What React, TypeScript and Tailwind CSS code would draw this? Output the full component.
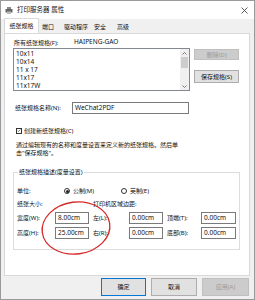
export default function App() {
  const input = "h-[12px] border border-[#7a7a7a] bg-white flex items-center px-[2px] text-[6.5px]";
  return (
    <div className="w-[255px] h-[300px] bg-[#f0f0f0] border border-[#9a9a9a] flex flex-col text-[6px] leading-none text-[#111] font-['Noto_Sans','Noto_Sans_CJK_SC',sans-serif] overflow-hidden">
      {/* title bar */}
      <div className="h-[18px] bg-white flex items-center pl-[4px] pr-[6px] shrink-0">
        <svg width="8" height="7" viewBox="0 0 8 7" className="mr-[4px]">
          <rect x="2" y="0" width="4" height="2" fill="#888" />
          <rect x="0.5" y="2" width="7" height="3.5" fill="#666" />
          <rect x="2" y="4.5" width="4" height="2.5" fill="#bbb" />
        </svg>
        <span className="text-[6.5px]">打印服务器 属性</span>
        <svg width="7" height="7" viewBox="0 0 7 7" className="ml-auto">
          <path d="M0.5 0.5 L6.5 6.5 M6.5 0.5 L0.5 6.5" stroke="#333" strokeWidth="0.8" />
        </svg>
      </div>
      {/* tabs */}
      <div className="h-[14px] flex items-end pl-[3px] shrink-0 relative z-10">
        <div className="h-[15px] w-[35px] bg-white border border-b-0 border-[#d9d9d9] flex items-center justify-center">纸张规格</div>
        <div className="h-[13px] flex items-center ml-[3px]">端口</div>
        <div className="h-[13px] flex items-center ml-[10px]">驱动程序</div>
        <div className="h-[13px] flex items-center ml-[6px]">安全</div>
        <div className="h-[13px] flex items-center ml-[11px]">高级</div>
      </div>
      {/* panel */}
      <div className="ml-[3px] w-[246px] h-[243px] bg-white border border-[#d9d9d9] flex flex-col pl-[8px] pr-[8px] shrink-0 relative">
        <div className="mt-[4px] h-[9px] flex items-center pl-[1px]">
          <span className="w-[60px]">所有纸张规格(F):</span>
          <span className="text-[6.5px]">HAIPENG-GAO</span>
        </div>
        <div className="mt-[1px] flex gap-[4px]">
          <div className="w-[177px] h-[43px] border border-[#828790] flex">
            <div className="flex-1 flex flex-col pl-[2px] pt-[1px] text-[6.5px]">
              {["10x11", "10x14", "11 x 17", "11x17", "11x17W"].map((t) => (
                <div key={t} className="h-[8.3px] flex items-center">{t}</div>
              ))}
            </div>
            <div className="w-[9px] bg-[#f0f0f0] flex flex-col items-center">
              <div className="h-[8px] flex items-center">
                <svg width="5" height="3" viewBox="0 0 5 3"><path d="M0.5 2.5 L2.5 0.5 L4.5 2.5" stroke="#606060" strokeWidth="0.8" fill="none" /></svg>
              </div>
              <div className="w-[7px] h-[11px] bg-[#cdcdcd]" />
              <div className="mt-auto h-[8px] flex items-center">
                <svg width="5" height="3" viewBox="0 0 5 3"><path d="M0.5 0.5 L2.5 2.5 L4.5 0.5" stroke="#606060" strokeWidth="0.8" fill="none" /></svg>
              </div>
            </div>
          </div>
          <div className="flex flex-col pt-[1px]">
            <div className="w-[45px] h-[11px] bg-[#cccccc] border border-[#bfbfbf] text-[#9a9a9a] flex items-center justify-center">删除(D)</div>
            <div className="mt-[10px] w-[45px] h-[13px] bg-[#e1e1e1] border border-[#adadad] flex items-center justify-center">保存规格(S)</div>
          </div>
        </div>
        <div className="mt-[11px] h-[12px] flex items-center pl-[2px]">
          <span className="w-[57px]">纸张规格名称(N):</span>
          <div className={input + " w-[117px] h-[12px]"}>WeChat2PDF</div>
        </div>
        <div className="mt-[12px] h-[9px] flex items-center pl-[3px]">
          <div className="w-[6px] h-[6px] border border-[#333] flex items-center justify-center mr-[2px]">
            <svg width="5" height="5" viewBox="0 0 5 5"><path d="M0.8 2.6 L2 3.8 L4.3 1.2" stroke="#222" strokeWidth="0.7" fill="none" /></svg>
          </div>
          <span>创建新纸张规格(C)</span>
        </div>
        <div className="mt-[6px] pl-[3px] leading-[8px]">
          <div>通过编辑现有的名称和度量设置来定义新的纸张规格。然后单</div>
          <div>击"保存规格"。</div>
        </div>
        <fieldset className="mt-[11px] w-[227px] border border-[#dcdcdc] px-[3px] pb-[10px]">
          <legend className="ml-[1px] px-[1px] h-[8px] flex items-center">纸张规格描述(度量设置)</legend>
          <div className="mt-[11px] h-[8px] flex items-center">
            <span className="w-[47px]">单位:</span>
            <div className="w-[6px] h-[6px] rounded-full border border-[#333] flex items-center justify-center mr-[3px]">
              <div className="w-[3px] h-[3px] rounded-full bg-[#222]" />
            </div>
            <span className="w-[48px]">公制(M)</span>
            <div className="w-[6px] h-[6px] rounded-full border border-[#333] mr-[3px]" />
            <span>英制(E)</span>
          </div>
          <div className="mt-[5px] h-[8px] flex items-center">
            <span className="w-[76px]">纸张大小:</span>
            <span>打印机区域边距:</span>
          </div>
          <div className="mt-[4px] h-[12px] flex items-center">
            <span className="w-[38px]">宽度(W):</span>
            <div className={input + " w-[34px]"}>8.00cm</div>
            <span className="ml-[4px] w-[36px]">左(L):</span>
            <div className={input + " w-[34px]"}>0.00cm</div>
            <span className="ml-[4px] w-[34px]">顶端(T):</span>
            <div className={input + " w-[35px]"}>0.00cm</div>
          </div>
          <div className="mt-[3px] h-[12px] flex items-center">
            <span className="w-[38px]">高度(H):</span>
            <div className={input + " w-[34px]"}>25.00cm</div>
            <span className="ml-[4px] w-[36px]">右(R):</span>
            <div className={input + " w-[34px]"}>0.00cm</div>
            <span className="ml-[4px] w-[34px]">底部(B):</span>
            <div className={input + " w-[35px]"}>0.00cm</div>
          </div>
        </fieldset>
        <svg className="absolute left-[34px] top-[165px] pointer-events-none" width="74" height="58" viewBox="0 0 74 58">
          <ellipse cx="37" cy="29" rx="34" ry="26" fill="none" stroke="#d42a2a" strokeWidth="1.3" transform="rotate(-8 37 29)" />
        </svg>
      </div>
      {/* buttons */}
      <div className="mt-[2px] h-[18px] flex justify-end gap-[5px] pr-[5px] shrink-0">
        <div className="w-[45px] h-[18px] bg-[#e1e1e1] border border-[#0078d7] flex items-center justify-center">确定</div>
        <div className="w-[46px] h-[18px] bg-[#e1e1e1] border border-[#adadad] flex items-center justify-center">取消</div>
        <div className="w-[47px] h-[18px] bg-[#cccccc] border border-[#bfbfbf] text-[#9a9a9a] flex items-center justify-center">应用(A)</div>
      </div>
    </div>
  );
}
